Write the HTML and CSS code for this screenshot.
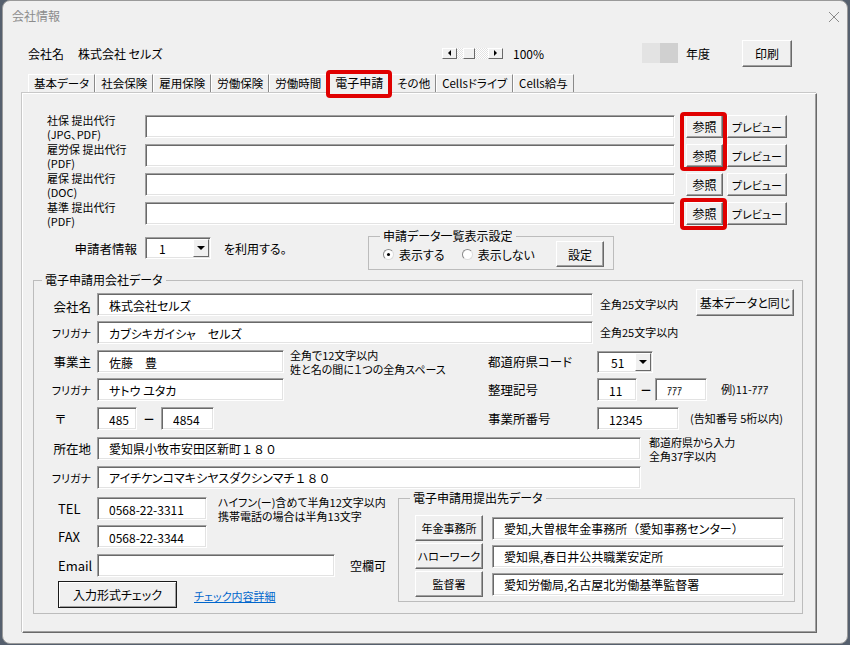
FILE: index.html
```html
<!DOCTYPE html>
<html lang="ja">

<head>
    <meta charset="UTF-8">
    <meta name="viewport" content="width=device-width, initial-scale=1.0">
    <title>会社情報</title>
    <link rel="stylesheet" href="styles.css">
</head>

<body>
    <div class="window">
        <div class="titlebar">
            <span class="title">会社情報</span>
            <svg class="close" viewBox="0 0 12 12" width="12" height="12">
                <path d="M1 1 L11 11 M11 1 L1 11" stroke="#8a8a8a" stroke-width="1" fill="none" />
            </svg>
        </div>

        <div class="header">
            <div class="company">
                <span>会社名</span><span class="company-name">株式会社 セルズ</span>
            </div>
            <div class="zoom-ctl">
                <div class="scroller">
                    <span class="scroll-btn"><i class="arrow-left"></i></span>
                    <span class="scroll-thumb"></span>
                    <span class="scroll-btn end"><i class="arrow-right"></i></span>
                </div>
                <span class="zoom-value">100%</span>
            </div>
            <div class="year">
                <span class="swatch light"></span><span class="swatch dark"></span>
                <span class="year-label">年度</span>
            </div>
            <button class="btn print">印刷</button>
        </div>

        <ul class="tabs">
            <li class="tab">基本データ</li>
            <li class="tab">社会保険</li>
            <li class="tab">雇用保険</li>
            <li class="tab">労働保険</li>
            <li class="tab">労働時間</li>
            <li class="tab active">電子申請</li>
            <li class="tab">その他</li>
            <li class="tab">Cellsドライブ</li>
            <li class="tab">Cells給与</li>
        </ul>

        <div class="panel">
            <!-- 提出代行ファイル -->
            <div class="file-row">
                <div class="file-label">社保 提出代行<br>(JPG、PDF)</div>
                <input class="field file-path" value="" readonly>
                <button class="btn browse">参照</button>
                <button class="btn preview">プレビュー</button>
            </div>
            <div class="file-row">
                <div class="file-label">雇労保 提出代行<br>(PDF)</div>
                <input class="field file-path" value="" readonly>
                <button class="btn browse">参照</button>
                <button class="btn preview">プレビュー</button>
            </div>
            <div class="file-row">
                <div class="file-label">雇保 提出代行<br>(DOC)</div>
                <input class="field file-path" value="" readonly>
                <button class="btn browse">参照</button>
                <button class="btn preview">プレビュー</button>
            </div>
            <div class="file-row">
                <div class="file-label">基準 提出代行<br>(PDF)</div>
                <input class="field file-path" value="" readonly>
                <button class="btn browse">参照</button>
                <button class="btn preview">プレビュー</button>
            </div>

            <div class="marker marker-a"></div>
            <div class="marker marker-b"></div>

            <div class="apply-row">
                <div class="apply">
                    <span class="apply-label">申請者情報</span>
                    <div class="combo applicant">
                        <span class="combo-value">1</span>
                        <span class="combo-btn"><i class="arrow-down"></i></span>
                    </div>
                    <span class="apply-text">を利用する。</span>
                </div>
                <fieldset class="group list-setting">
                    <legend>申請データ一覧表示設定</legend>
                    <div class="list-body">
                        <label class="radio"><span class="radio-dot on"></span>表示する</label>
                        <label class="radio second"><span class="radio-dot"></span>表示しない</label>
                        <button class="btn setting">設定</button>
                    </div>
                </fieldset>
            </div>

            <fieldset class="group company-data">
                <legend>電子申請用会社データ</legend>

                <div class="row first">
                    <span class="lbl">会社名</span>
                    <input class="field w-wide" value="株式会社セルズ" readonly>
                    <span class="note limit">全角25文字以内</span>
                    <button class="btn same">基本データと同じ</button>
                </div>
                <div class="row gap5">
                    <span class="lbl kana">フリガナ</span>
                    <input class="field w-wide" value="カブシキガイシャ&#12288;セルズ" readonly>
                    <span class="note limit">全角25文字以内</span>
                </div>

                <div class="row gap6">
                    <div class="left">
                        <span class="lbl">事業主</span>
                        <input class="field w-name" value="佐藤&#12288;豊" readonly>
                        <span class="note two-line">全角で12文字以内<br>姓と名の間に１つの全角スペース</span>
                    </div>
                    <span class="rlbl">都道府県コード</span>
                    <div class="combo pref">
                        <span class="combo-value">51</span>
                        <span class="combo-btn"><i class="arrow-down"></i></span>
                    </div>
                </div>
                <div class="row gap5">
                    <div class="left">
                        <span class="lbl kana">フリガナ</span>
                        <input class="field w-name" value="サトウ ユタカ" readonly>
                    </div>
                    <span class="rlbl">整理記号</span>
                    <input class="field w-code" value="11" readonly>
                    <span class="dash">－</span>
                    <input class="field w-code2 hw" value="ｱｱｱ" readonly>
                    <span class="note sample">例)11-ｱｱｱ</span>
                </div>
                <div class="row gap6">
                    <div class="left">
                        <span class="lbl zip">〒</span>
                        <input class="field w-zip" value="485" readonly>
                        <span class="dash zip-dash">－</span>
                        <input class="field w-zip2" value="4854" readonly>
                    </div>
                    <span class="rlbl">事業所番号</span>
                    <input class="field w-office" value="12345" readonly>
                    <span class="note office-note">(告知番号 5桁以内)</span>
                </div>

                <div class="row gap7">
                    <span class="lbl">所在地</span>
                    <div class="field w-addr">愛知県小牧市安田区新町<span class="full">１８０</span></div>
                    <span class="note two-line addr-note">都道府県から入力<br>全角37字以内</span>
                </div>
                <div class="row gap6">
                    <span class="lbl kana">フリガナ</span>
                    <div class="field w-addr">アイチケンコマキシヤスダクシンマチ<span class="full">１８０</span></div>
                </div>

                <div class="contact">
                    <div class="contact-left">
                        <div class="row">
                            <span class="lbl latin">TEL</span>
                            <input class="field w-tel" value="0568-22-3311" readonly>
                            <span class="note two-line tel-note">ハイフン(ー)含めて半角12文字以内<br>携帯電話の場合は半角13文字</span>
                        </div>
                        <div class="row gap5">
                            <span class="lbl latin">FAX</span>
                            <input class="field w-tel" value="0568-22-3344" readonly>
                        </div>
                        <div class="row gap6">
                            <span class="lbl latin">Email</span>
                            <input class="field w-mail" value="" readonly>
                            <span class="optional">空欄可</span>
                        </div>
                        <div class="check-row">
                            <button class="btn check">入力形式チェック</button>
                            <a class="detail-link" href="#">チェック内容詳細</a>
                        </div>
                    </div>

                    <fieldset class="group submit-to">
                        <legend>電子申請用提出先データ</legend>
                        <div class="office-list">
                            <div class="office-row">
                                <button class="btn office">年金事務所</button>
                                <div class="field w-office-name">愛知,大曽根年金事務所<span class="full">（</span>愛知事務センター<span class="full">）</span></div>
                            </div>
                            <div class="office-row">
                                <button class="btn office">ハローワーク</button>
                                <input class="field w-office-name" value="愛知県,春日井公共職業安定所" readonly>
                            </div>
                            <div class="office-row">
                                <button class="btn office">監督署</button>
                                <input class="field w-office-name" value="愛知労働局,名古屋北労働基準監督署" readonly>
                            </div>
                        </div>
                    </fieldset>
                </div>
            </fieldset>
        </div>
    </div>
</body>

</html>
```

FILE: styles.css
```css
* {
    box-sizing: border-box;
}

body {
    margin: 0;
    background: #56606e;
    font-family: "Noto Sans CJK JP", "Noto Sans", sans-serif;
    font-size: 12px;
    color: #000;
    font-feature-settings: "palt" 1;
}

.window {
    margin-left: 2px;
    width: 846px;
    height: 644px;
    background: #f0f0f0;
    border: 1px solid #9a9a9a;
    border-radius: 8px;
    overflow: hidden;
}

.titlebar {
    height: 29px;
    display: flex;
    align-items: center;
    justify-content: space-between;
    padding: 0 7px 0 9px;

    .title {
        color: #8c8c8c;
        font-size: 12px;
    }

    .close {
        display: block;
        margin-top: 2px;
    }
}

/* 3D look shared by buttons and fields */
.btn {
    font: inherit;
    font-feature-settings: "palt" 1;
    color: #000;
    background: #f0f0f0;
    border: 1px solid;
    border-color: #fff #696969 #696969 #fff;
    box-shadow: inset -1px -1px 0 #a0a0a0;
    padding: 0;
    cursor: pointer;
}

.field {
    font: inherit;
    font-feature-settings: "palt" 1;
    color: #000;
    height: 23px;
    background: #fff;
    border: 1px solid;
    border-color: #a0a0a0 #fff #fff #a0a0a0;
    box-shadow: inset 1px 1px 0 #696969, inset -1px -1px 0 #e3e3e3;
    padding: 1px 0 0 11px;
    outline: none;
}

div.field {
    line-height: 20px;
    white-space: nowrap;
}

/* full-width digits and brackets keep their full width */
.full {
    font-feature-settings: normal;
}

.header {
    display: flex;
    align-items: center;
    height: 28px;
    margin-top: 9px;
    padding-left: 25px;

    .company {
        width: 414px;
    }

    .company-name {
        margin-left: 14px;
    }
}

.zoom-ctl {
    display: flex;
    align-items: center;
    width: 200px;

    .zoom-value {
        margin-left: 10px;
    }
}

.scroller {
    display: flex;
    width: 61px;
    height: 11px;
    background: repeating-conic-gradient(#fff 0 25%, #e2e2e2 0 50%) 0 0 / 2px 2px;

    .scroll-btn,
    .scroll-thumb {
        display: flex;
        align-items: center;
        justify-content: center;
        height: 11px;
        background: #f0f0f0;
        border: 1px solid;
        border-color: #fff #696969 #696969 #fff;
    }

    .scroll-btn {
        width: 15px;
    }

    .scroll-btn.end {
        margin-left: auto;
    }

    .scroll-thumb {
        width: 12px;
        margin-left: 6px;
    }
}

.arrow-left,
.arrow-right {
    width: 0;
    height: 0;
    border-top: 3px solid transparent;
    border-bottom: 3px solid transparent;
}

.arrow-left {
    border-right: 3px solid #000;
}

.arrow-right {
    border-left: 3px solid #000;
}

.arrow-down {
    width: 0;
    height: 0;
    border-left: 4px solid transparent;
    border-right: 4px solid transparent;
    border-top: 4px solid #000;
}

.year {
    display: flex;
    align-items: center;
    width: 100px;

    .swatch {
        width: 18px;
        height: 20px;
    }

    .light {
        background: #e3e3e3;
    }

    .dark {
        background: #d0d0d0;
    }

    .year-label {
        margin-left: 8px;
    }
}

.print {
    width: 50px;
    height: 27px;
}

.tabs {
    display: flex;
    align-items: flex-end;
    list-style: none;
    height: 20px;
    margin: 6px 0 0 25px;
    padding: 0;

    .tab {
        height: 19px;
        padding: 0 5px;
        border-top: 1px solid #fff;
        border-left: 1px solid #fff;
        border-right: 1px solid #8a8a8a;
        font-size: 11.5px;
        line-height: 17px;
    }

    .tab.active {
        position: relative;
        z-index: 1;
        height: 22px;
        margin-bottom: -1px;
        padding: 0 7px;
        background: #f0f0f0;
        font-size: 12px;
        line-height: 19px;
    }

    .tab.active::after {
        content: "";
        position: absolute;
        inset: -3px -2px -4px -2px;
        border: 4px solid #e00000;
        border-radius: 4px;
    }
}

.panel {
    position: relative;
    width: 795px;
    height: 540px;
    margin-left: 19px;
    padding: 18px 0 0 10px;
    border: 1px solid;
    border-color: #fff #696969 #696969 #fff;
    box-shadow: inset -1px -1px 0 #a0a0a0, -1px -1px 0 #c8c8c8;
}

.file-row {
    display: flex;
    align-items: center;
    height: 29px;
    margin-left: 14px;

    .file-label {
        width: 98px;
        font-size: 11px;
        line-height: 14px;
    }

    .file-path {
        width: 530px;
    }

    .browse {
        width: 37px;
        height: 23px;
        margin-left: 11px;
    }

    .preview {
        width: 60px;
        height: 23px;
        margin-left: 4px;
        font-size: 11px;
    }
}

/* red highlight frames */
.marker {
    position: absolute;
    border: 4px solid #e00000;
    border-radius: 4px;
}

.marker-a {
    left: 657px;
    top: 18px;
    width: 47px;
    height: 59px;
}

.marker-b {
    left: 657px;
    top: 104px;
    width: 47px;
    height: 32px;
}

.combo {
    display: flex;
    height: 22px;
    background: #fff;
    border: 1px solid;
    border-color: #a0a0a0 #fff #fff #a0a0a0;
    box-shadow: inset 1px 1px 0 #696969, inset -1px -1px 0 #e3e3e3;
    padding: 1px;

    .combo-value {
        flex: 1;
        padding-left: 12px;
        line-height: 19px;
    }

    .combo-btn {
        display: flex;
        align-items: center;
        justify-content: center;
        width: 16px;
        background: #f0f0f0;
        border: 1px solid;
        border-color: #fff #696969 #696969 #fff;
    }
}

.apply-row {
    display: flex;
    align-items: flex-start;
    height: 42px;
    margin-left: 14px;

    .apply {
        display: flex;
        align-items: center;
        width: 321px;
        margin-top: 9px;
    }

    .apply-label {
        width: 90px;
        margin-right: 8px;
        text-align: right;
        font-size: 12.5px;
    }

    .applicant {
        width: 66px;
    }

    .apply-text {
        margin-left: 13px;
    }
}

.group {
    margin: 0;
    padding: 0;
    border: 1px solid #bcbcbc;
    min-inline-size: 0;

    >legend {
        padding: 0 3px;
        font-size: 12px;
        line-height: 14px;
    }
}

.list-setting {
    width: 246px;
    height: 41px;
    margin-top: 1px;

    >legend {
        margin-left: 11px;
    }

    .list-body {
        display: flex;
        align-items: center;
        height: 26px;
        margin-top: -2px;
        padding-left: 14px;
    }

    .setting {
        width: 48px;
        height: 26px;
        margin-left: 21px;
    }
}

.radio {
    display: flex;
    align-items: center;
    gap: 5px;

    &.second {
        margin-left: 17px;
    }
}

.radio-dot {
    position: relative;
    width: 11px;
    height: 11px;
    border-radius: 50%;
    background: #fff;
    border: 1px solid;
    border-color: #8a8a8a #dcdcdc #dcdcdc #8a8a8a;

    &.on::after {
        content: "";
        position: absolute;
        left: 3px;
        top: 3px;
        width: 3px;
        height: 3px;
        border-radius: 50%;
        background: #000;
    }
}

.company-data {
    width: 770px;
    margin-top: 3px;
    padding-bottom: 5px;

    >legend {
        margin-left: 8px;
    }
}

.row {
    display: flex;
    align-items: center;
    height: 23px;

    &.first {
        align-items: flex-end;
        height: 27px;
        margin-top: 2px;
    }

    &.gap5 {
        margin-top: 5px;
    }

    &.gap6 {
        margin-top: 6px;
    }

    &.gap7 {
        margin-top: 7px;
    }

    .left {
        display: flex;
        align-items: center;
        width: 454px;
    }
}

.lbl {
    width: 57px;
    margin-right: 6px;
    text-align: right;
    font-size: 12.5px;

    &.kana {
        font-size: 11px;
    }

    &.zip {
        padding-left: 21px;
        text-align: left;
    }

    &.latin {
        padding-left: 24px;
        text-align: left;
        font-size: 13px;
    }
}

.rlbl {
    width: 109px;
    font-size: 12.5px;
}

.note {
    font-size: 11px;
    line-height: 23px;

    &.two-line {
        line-height: 14px;
        margin-left: 6px;
    }

    &.limit {
        width: 96px;
        margin-left: 7px;
    }

    &.sample {
        margin-left: 14px;
    }

    &.office-note {
        margin-left: 11px;
    }

    &.addr-note {
        margin-left: 8px;
    }

    &.tel-note {
        margin-left: 11px;
    }
}

.same {
    width: 98px;
    height: 27px;
}

.dash {
    width: 18px;
    text-align: center;
    font-weight: bold;

    &.zip-dash {
        width: 24px;
    }
}

.w-wide {
    width: 496px;
}

.w-name {
    width: 187px;
}

.pref {
    width: 56px;
}

.w-code {
    width: 40px;
}

.w-code2 {
    width: 52px;
}

.hw {
    font-size: 10px;
}

.w-zip {
    width: 40px;
}

.w-zip2 {
    width: 53px;
}

.w-office {
    width: 82px;
}

.w-addr {
    width: 544px;
}

.w-tel {
    width: 110px;
}

.w-mail {
    width: 238px;
}

.optional {
    margin-left: 15px;
    font-size: 12px;
}

.contact {
    display: flex;
    align-items: flex-start;
    margin-top: 8px;

    .contact-left {
        width: 364px;
    }
}

.check-row {
    display: flex;
    align-items: center;
    margin-top: 4px;
    padding-left: 24px;

    .check {
        width: 119px;
        height: 27px;
        border: 1px solid #1a1a1a;
        box-shadow: inset 1px 1px 0 #fff, inset -1px -1px 0 #a0a0a0;
    }

    .detail-link {
        margin-left: 17px;
        margin-top: 3px;
        color: #0066cc;
        font-size: 11px;
    }
}

.submit-to {
    width: 397px;
    margin-top: -6px;
    padding-bottom: 4px;

    >legend {
        margin-left: 11px;
    }

    .office-list {
        display: flex;
        flex-direction: column;
        gap: 2px;
        margin-top: 10px;
        padding-left: 16px;
    }

    .office-row {
        display: flex;
        align-items: center;
        height: 26px;
    }

    .office {
        width: 68px;
        height: 26px;
        font-size: 11px;
    }

    .w-office-name {
        width: 292px;
        margin-left: 9px;
    }
}
```
